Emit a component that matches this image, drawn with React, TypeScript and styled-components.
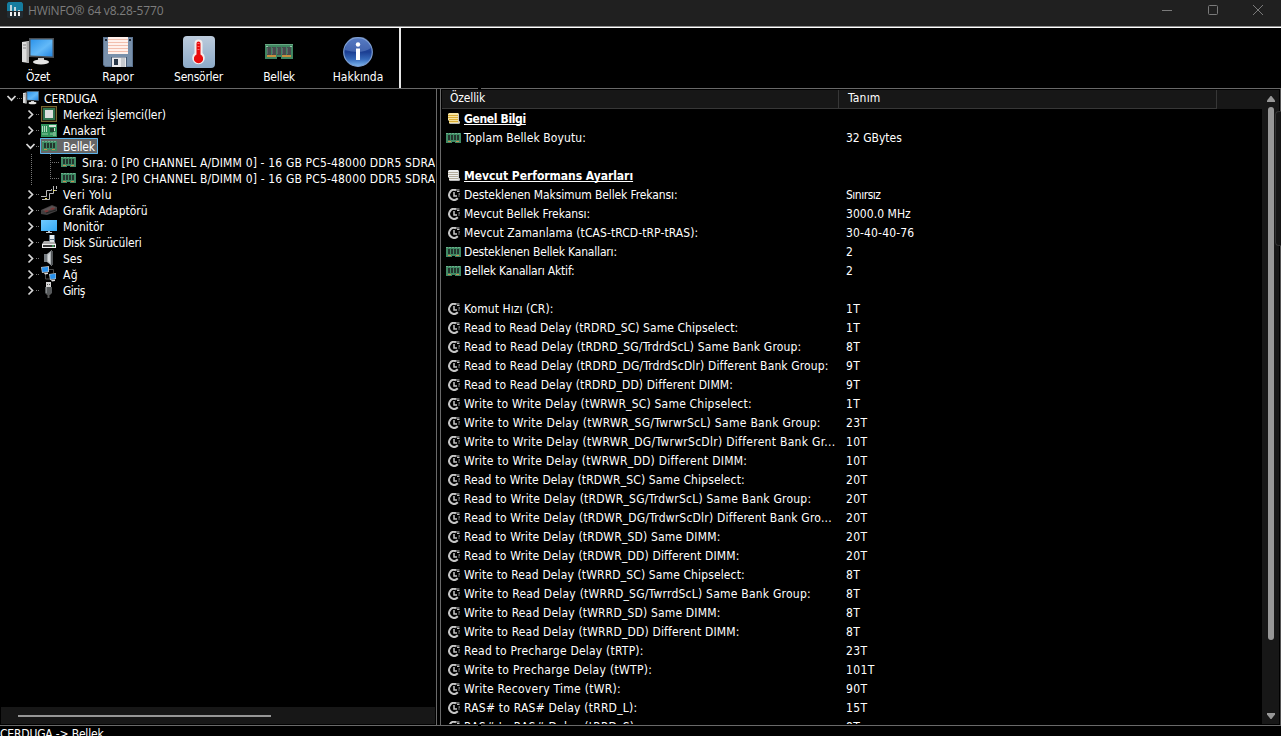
import React from 'react';
import styled, { createGlobalStyle, css } from 'styled-components';

const GlobalStyle = createGlobalStyle`
  * { box-sizing: border-box; }
  html, body { margin: 0; background: #000; overflow: hidden; }
  body { font: 12px/16px 'DejaVu Sans Condensed', 'DejaVu Sans', sans-serif; font-stretch: condensed; color: #fff; }
  svg { display: block; flex: none; }
`;

const Window = styled.div`
  position: relative;
  width: 1281px;
  height: 736px;
  overflow: hidden;
  display: flex;
  flex-direction: column;
  background: #000;
`;

const TitleBar = styled.header`
  height: 28px;
  flex: none;
  display: flex;
  align-items: flex-start;
  padding: 2px 18px 0 7px;
  background: #202020;
  border-bottom: 1px solid #fff;
  box-shadow: inset 0 -1px 0 #8c8c8c;
`;

const TitleText = styled.span`
  margin-left: 5px;
  flex: 1;
  font: 12px/17px 'Open Sans', 'Noto Sans', sans-serif;
  letter-spacing: -0.15px;
  color: #7d7d7d;
`;

const WindowButtons = styled.div`
  display: flex;
  gap: 35.5px;
  padding-top: 3px;
`;

const Toolbar = styled.nav`
  width: 401px;
  height: 60px;
  flex: none;
  display: flex;
  border-right: 2px solid #e6e6e6;
`;

const ToolButton = styled.div<{ $w?: number }>`
  width: ${p => p.$w ?? 80}px;
  flex: none;
  display: flex;
  flex-direction: column;
  align-items: center;
  padding-top: 7px;
`;

const ToolIcon = styled.div`
  height: 34px;
  display: flex;
  align-items: center;
`;

const ToolLabel = styled.span<{ $ls?: number }>`
  white-space: nowrap;
  line-height: 16px;
  letter-spacing: ${p => p.$ls ?? 0}px;
`;

const Rule = styled.div`
  height: 1px;
  flex: none;
  background: linear-gradient(90deg, #696969 478px, #000 478px, #000 481px, #696969 481px);
`;

const Panes = styled.main`
  height: 636px;
  flex: none;
  display: flex;
`;

const TreePane = styled.section`
  width: 437px;
  flex: none;
  display: flex;
  flex-direction: column;
  border-right: 1px solid #696969;
`;

const Tree = styled.div`
  flex: 1;
  width: 435px;
  padding-top: 1px;
  overflow: hidden;
`;

const TreeRow = styled.div<{ $depth: number }>`
  height: 16px;
  display: flex;
  align-items: center;
  white-space: nowrap;
  padding-left: ${p => [6, 25, 31][p.$depth]}px;
`;

const Toggle = styled.span`
  width: 11px;
  height: 16px;
  display: flex;
  align-items: center;
  justify-content: center;
`;

const Dots = styled.span<{ $w: number }>`
  width: ${p => p.$w}px;
  height: 1px;
  background: repeating-linear-gradient(90deg, #777 0 1px, transparent 1px 2px);
`;

const Branch = styled.span`
  width: 28px;
  height: 16px;
  display: flex;
  &::before {
    content: '';
    width: 1px;
    background: repeating-linear-gradient(180deg, #777 0 1px, transparent 1px 2px);
  }
`;

const BranchArm = styled.span<{ $last?: boolean }>`
  width: 10px;
  height: ${p => (p.$last ? 9 : 16)}px;
  margin-left: 18px;
  background:
    repeating-linear-gradient(180deg, #777 0 1px, transparent 1px 2px) 0 0 / 1px 100% no-repeat,
    repeating-linear-gradient(90deg, #777 0 1px, transparent 1px 2px) 0 8px / 100% 1px no-repeat;
`;

const Node = styled.span<{ $selected?: boolean; $root?: boolean }>`
  height: 16px;
  display: flex;
  align-items: center;
  padding: 0 3px 0 1px;
  gap: ${p => (p.$root ? 5 : 6)}px;
  ${p => p.$selected && css`
    background: #666;
    box-shadow: inset 0 0 0 1px #5fb4ea;
    border-radius: 1px;
  `}
`;

const Label = styled.span<{ $ls?: number }>`
  letter-spacing: ${p => p.$ls ?? 0}px;
  white-space: pre;
`;

const TreeLabel = styled(Label)`
  padding-top: 2px;
`;

const HScroll = styled.div`
  width: 434px;
  height: 17px;
  margin: 0 0 1px 1px;
  flex: none;
  display: flex;
  align-items: center;
  padding: 0 17px;
  background: #171717;
`;

const HThumb = styled.div`
  width: 253px;
  height: 2px;
  background: #979797;
`;

const ListPane = styled.section`
  flex: 1;
  display: flex;
  margin-left: 3px;
  border-left: 1px solid #696969;
  border-right: 1px solid #555;
  padding: 1px 1px 1px 1px;
`;

const ListArea = styled.div`
  flex: 1;
  display: flex;
  flex-direction: column;
  overflow: hidden;
`;

const HeaderRow = styled.div`
  height: 19px;
  flex: none;
  display: flex;
  background: #171717;
`;

const HeaderCell = styled.div<{ $w: number; $pad: number }>`
  width: ${p => p.$w}px;
  padding-left: ${p => p.$pad}px;
  line-height: 17px;
  border-right: 1px solid #373737;
  border-bottom: 1px solid #373737;
`;

const ListRow = styled.div`
  height: 19px;
  flex: none;
  display: flex;
  align-items: center;
`;

const PropertyCell = styled.div`
  width: 404px;
  height: 19px;
  display: flex;
  align-items: center;
  padding-left: 4px;
  gap: 2px;
`;

const IconBox = styled.span`
  width: 16px;
  display: flex;
  justify-content: center;
`;

const PropertyText = styled(Label)<{ $heading?: boolean }>`
  ${p => p.$heading && css`
    font-weight: bold;
    text-decoration: underline;
    text-underline-offset: 1px;
    text-decoration-skip-ink: none;
    text-decoration-thickness: 1px;
  `}
`;

const VScroll = styled.div`
  width: 17px;
  flex: none;
  display: flex;
  flex-direction: column;
  align-items: center;
  background: #171717;
  padding: 6px 0 5px;
`;

const VThumb = styled.div`
  width: 6px;
  height: 533px;
  margin-top: 5px;
  border-radius: 3px;
  background: #979797;
`;

const Spacer = styled.div`
  flex: 1;
`;

const StatusBar = styled.footer`
  height: 10px;
  overflow: hidden;
  flex: none;
  line-height: 16px;
  letter-spacing: -0.18px;
`;

const EdgeTab = styled.div`
  position: absolute;
  right: 0;
  top: 111px;
  width: 6px;
  height: 135px;
  border: 1px solid #333;
  border-right: 0;
  border-radius: 4px 0 0 4px;
  background: #151515;
`;

/* ---------- icons ---------- */

const AppLogo = () => (
  <svg width="16" height="16" viewBox="0 0 16 16">
    <rect width="16" height="16" rx="1.5" fill="#222b31" />
    <path d="M1.500 0h13L16 1.500V9H0V1.500z" fill="#157c9f" />
    <path d="M3 3h2v6H3zM7 5h2v4H7zM11 8h2v1h-2z" fill="#bfd3da" />
    <path d="M3 10h2v1H3zM7 10h2v1H7zM3 11h2v3H3zM7 11h2v3H7zM11 10h2v4h-2z" fill="#f0f0f0" />
  </svg>
);

const PcIcon = ({ w = 32, h = 28 }: { w?: number; h?: number }) => (
  <svg width={w} height={h} viewBox="0 0 32 28" preserveAspectRatio="none">
    <defs>
      <linearGradient id="scr" x1="0" y1="0" x2="1" y2="1">
        <stop offset="0" stopColor="#2c93ea" />
        <stop offset=".55" stopColor="#63b9f8" />
        <stop offset="1" stopColor="#2285e2" />
      </linearGradient>
    </defs>
    <path d="M0 4l7-1v22l-7-1z" fill="#dcdcdc" />
    <path d="M4.500 3.500H7V25l-2.500-.5z" fill="#a9a9a9" />
    <path d="M1 7h3M1 10h3" stroke="#888" />
    <path d="M7 0h25v20L7 19z" fill="#4b4f54" />
    <path d="M8.500 1.500h22v17l-22-1z" fill="url(#scr)" />
    <path d="M16 20h6v4h-6z" fill="#c9c9c9" />
    <ellipse cx="19" cy="24" rx="8" ry="2.600" fill="#e5e5e5" />
  </svg>
);

const FloppyIcon = () => (
  <svg width="30" height="30" viewBox="0 0 30 30">
    <path d="M0 0h30v30H2l-2-2z" fill="#5c7390" />
    <path d="M1 1h28v28H2.500L1 27.500z" fill="#7890ab" />
    <path d="M5 0h20v17H5z" fill="#fff1ec" />
    <path d="M5 2.500h20M5 5.500h20M5 8.500h20M5 11.500h20M5 14.500h20" stroke="#f2bfae" />
    <path d="M2 2h2v2H2zM26 2h2v2h-2z" fill="#1f2a38" />
    <path d="M8 20h16v10H8z" fill="#465a74" />
    <path d="M9 20.500h14V30H9z" fill="#e9e9ec" />
    <path d="M11 22h4v6h-4z" fill="#293747" />
    <path d="M18 21h4v9h-4z" fill="#c6c9ce" />
  </svg>
);

const ThermoIcon = () => (
  <svg width="32" height="32" viewBox="0 0 32 32">
    <defs>
      <linearGradient id="th" x1="0" y1="0" x2="0" y2="1">
        <stop offset="0" stopColor="#bccbdc" />
        <stop offset="1" stopColor="#8caac8" />
      </linearGradient>
    </defs>
    <rect width="32" height="32" rx="4" fill="url(#th)" />
    <path d="M11.500 7.500a4 4 0 0 1 8 0v9.500a6.300 6.300 0 1 1-8 0z" fill="#f3eded" />
    <path d="M13.500 7.500a2 2 0 0 1 4 0v11a4.600 4.600 0 1 1-4 0z" fill="#e90b0b" />
    <path d="M14.500 7.500h2M14.500 10.500h2M14.500 13.500h2" stroke="#ff6a6a" />
  </svg>
);

const BigRamIcon = () => (
  <svg width="28" height="16" viewBox="0 0 28 16">
    <path d="M0 0h28v15H16v-2h-4v2H0z" fill="#3f8560" />
    <path d="M0 .5h28" stroke="#68a883" />
    <path d="M1 2h2v1H1zM25 2h2v1h-2z" fill="#94c7a8" />
    <path d="M2 3h4v8H2zM7 3h4v8H7zM12 3h4v8h-4zM17 3h4v8h-4zM22 3h4v8h-4z" fill="#484b4e" />
    <path d="M2.500 4v6M7.500 4v6M12.500 4v6M17.500 4v6M22.500 4v6" stroke="#62666a" />
    <path d="M2 11h9v2H2zM17 11h9v2h-9z" fill="#c9903e" />
  </svg>
);

const InfoIcon = () => (
  <svg width="30" height="30" viewBox="0 0 30 30">
    <defs>
      <linearGradient id="inf" x1="0" y1="0" x2="0" y2="1">
        <stop offset="0" stopColor="#3c62b4" />
        <stop offset=".5" stopColor="#1b3e92" />
        <stop offset=".75" stopColor="#3568b8" />
        <stop offset="1" stopColor="#7db6ee" />
      </linearGradient>
    </defs>
    <circle cx="15" cy="15" r="14.300" fill="url(#inf)" stroke="#7d9ed2" strokeWidth="1.200" />
    <path d="M2 13A13 13 0 0 1 28 11Q18 18 2 13z" fill="#8aa8e0" opacity=".35" />
    <circle cx="15" cy="7.500" r="2.200" fill="#fff" />
    <path d="M13 11.500h4V23h-4z" fill="#fff" />
  </svg>
);

const RamIcon = ({ wide }: { wide?: boolean }) => (
  <svg width={wide ? 16 : 15} height="12" viewBox={wide ? '0 0 16 12' : '0 0 15 12'}>
    <path d="M0 1h15v10H9v-1H6v1H0z" fill="#3f8a64" />
    <path d="M0 1.500h15" stroke="#6bb08b" strokeDasharray="2 1" />
    <path d="M2 3h2v5H2zM5 3h2v5H5zM8 3h2v5H8zM11 3h2v5h-2z" fill="#24342d" />
    <path d="M2 9h3v1H2zM10 9h3v1h-3z" fill="#c98d50" />
  </svg>
);

const CpuIcon = () => (
  <svg width="16" height="16" viewBox="0 0 16 16">
    <rect width="16" height="16" fill="#262413" />
    <rect x=".5" y=".5" width="15" height="15" fill="none" stroke="#c9a94e" strokeDasharray="1 1" />
    <rect x="2" y="2" width="12" height="12" fill="#2f7350" />
    <rect x="4" y="4" width="8" height="8" fill="#dedede" />
  </svg>
);

const BoardIcon = () => (
  <svg width="16" height="13" viewBox="0 0 16 13">
    <path d="M0 0h16v13H0z" fill="#2f9159" />
    <path d="M1.500 2v6M3.500 2v6M5.500 2v6" stroke="#b9d9c4" />
    <path d="M8 1h7v2H8zM11 4h3v3h-3z" fill="#d7e5d9" />
    <path d="M9 4h4v4H9z" fill="#1f4430" />
    <path d="M1 10h6M9 10h5" stroke="#8fc9a4" />
    <path d="M12 8h3v4h-3z" fill="#74b58b" />
  </svg>
);

const BusIcon = () => (
  <svg width="16" height="16" viewBox="0 0 16 16" fill="none">
    <path d="M0 10.500h5.500v-6h5V3M1 13.500h7.500v-6h4V4.500H16M12.500 0v5M15.500 0v3" stroke="#b9b9b9" />
    <path d="M4 12.500h2M12 4.500h2" stroke="#e8dc62" />
  </svg>
);

const GpuIcon = () => (
  <svg width="16" height="12" viewBox="0 0 16 12">
    <path d="M0 6l11-5 5 2v4L6 11 0 10z" fill="#413f40" />
    <path d="M1 6l10-4 4 1.500-10 4z" fill="#5a5354" />
    <path d="M3 7l3-1 2 1-3 1.500zM9 5l3-1.500 2 1L11 6z" fill="#7f3434" />
    <path d="M5 9l10-3" stroke="#222" />
  </svg>
);

const MonitorIcon = () => (
  <svg width="16" height="13" viewBox="0 0 16 13">
    <defs>
      <linearGradient id="mon" x1="0" y1="0" x2="1" y2="1">
        <stop offset="0" stopColor="#71caff" />
        <stop offset="1" stopColor="#35a9f5" />
      </linearGradient>
    </defs>
    <path d="M0 0h16v11H0z" fill="url(#mon)" />
    <path d="M7 11h2v1H7zM5 12h6v1H5z" fill="#b9c5ce" />
  </svg>
);

const DiskIcon = () => (
  <svg width="16" height="14" viewBox="0 0 16 14">
    <path d="M8 0h6v8H8z" fill="#5c7286" />
    <path d="M9 0h4v4H9z" fill="#e7eef2" />
    <path d="M3 6h10l2 3H1z" fill="#aaa" />
    <path d="M9 5h4v2H9z" fill="#dfe3e6" />
    <path d="M1 9h14v4H1z" fill="#f0f0f0" />
    <path d="M2 10h12v2H2z" fill="#383838" />
    <path d="M11 10.500h2v1h-2z" fill="#3fe46e" />
  </svg>
);

const SpeakerIcon = () => (
  <svg width="16" height="16" viewBox="0 0 16 16">
    <path d="M3 4h3v8H3z" fill="#777d82" />
    <path d="M6 4l5-4v16l-5-4z" fill="#adb2b5" />
    <path d="M10 1h2v14h-2z" fill="#54585b" />
    <path d="M7 5l2-2v10l-2-2z" fill="#d6dadd" />
  </svg>
);

const NetworkIcon = () => (
  <svg width="16" height="16" viewBox="0 0 16 16">
    <path d="M8 3.500h4.500V7M4.500 8v5H9" fill="none" stroke="#4a4a4a" />
    <path d="M0 1l8-1v6l-7 1zM8 8l7-1v6l-6 1z" fill="#b9c2ca" />
    <path d="M1 1.500L7 1v4.500L1.500 6zM9 8.500l5.500-.7v4.700L9.500 13z" fill="#2691ef" />
    <path d="M3 7l4-.5v1.500l-3 .5zM10 14l4-.5v1.500l-3 .5z" fill="#dedede" />
  </svg>
);

const UsbIcon = () => (
  <svg width="16" height="16" viewBox="0 0 16 16">
    <path d="M5 0h5v5H5z" fill="#d6d6d6" />
    <path d="M6 2h1v1H6zM8 2h1v1H8z" fill="#555" />
    <path d="M4 5h7v6l-2 2H6l-2-2z" fill="#56595b" />
    <path d="M5 5h1v6H5z" fill="#85898b" />
    <path d="M6.500 12h2v4h-2z" fill="#555" />
  </svg>
);

const ScrollIcon = ({ color, shade }: { color: string; shade: string }) => (
  <svg width="12" height="11" viewBox="0 0 12 11">
    <path d="M1 0h9l1 1v7l1 1v1l-1 1H2l-1-1V8L0 7V1z" fill={color} />
    <path d="M10 1h1v7l1 1v1h-1l-1-1z" fill="#c9c9c9" />
    <path d="M0 2.500h10M0 4.500h10M1 6.500h9M1 8.500h9" stroke={shade} />
    <path d="M2 10.500h9" stroke="#b5b5b5" />
  </svg>
);

const ClockIcon = () => (
  <svg width="12" height="12" viewBox="0 0 12 12" fill="none" stroke="#c6c6c6">
    <path d="M8 1.200A5 5 0 1 0 9.800 9.300" strokeWidth="2" />
    <path d="M8 1h3.500M9 2.500h2.500M10.500 5h1.500M10.500 7h1" strokeWidth="1" />
    <path d="M6 3v4h3" strokeWidth="1.500" />
  </svg>
);

const Chevron = ({ open }: { open?: boolean }) => (
  <svg width="11" height="11" viewBox="0 0 11 11" fill="none" stroke="#d8d8d8" strokeWidth="1.700">
    <path d={open ? 'M1.500 3l4 4.200 4-4.200' : 'M3.500 1.500l4 4-4 4'} />
  </svg>
);

/* ---------- data ---------- */

const tools: { label: string; icon: React.ReactNode; w?: number; ls?: number }[] = [
  { label: 'Özet', icon: <PcIcon />, w: 76, ls: -0.2 },
  { label: 'Rapor', icon: <FloppyIcon />, w: 84 },
  { label: 'Sensörler', icon: <ThermoIcon />, w: 77, ls: -0.25 },
  { label: 'Bellek', icon: <BigRamIcon />, w: 84, ls: -0.2 },
  { label: 'Hakkında', icon: <InfoIcon />, w: 74 },
];

interface Item { label: string; icon: React.ReactNode; depth: number; open?: boolean; selected?: boolean; last?: boolean; ls?: number }

const tree: Item[] = [
  { label: 'CERDUGA', icon: <PcIcon w={16} h={14} />, depth: 0, open: true, ls: -0.1 },
  { label: 'Merkezi İşlemci(ler)', icon: <CpuIcon />, depth: 1, ls: -0.13 },
  { label: 'Anakart', icon: <BoardIcon />, depth: 1 },
  { label: 'Bellek', icon: <RamIcon />, depth: 1, open: true, selected: true, ls: -0.2 },
  { label: 'Sıra: 0 [P0 CHANNEL A/DIMM 0] - 16 GB PC5-48000 DDR5 SDRAM', icon: <RamIcon />, depth: 2, ls: 0.16 },
  { label: 'Sıra: 2 [P0 CHANNEL B/DIMM 0] - 16 GB PC5-48000 DDR5 SDRAM', icon: <RamIcon />, depth: 2, last: true, ls: 0.16 },
  { label: 'Veri Yolu', icon: <BusIcon />, depth: 1, ls: 0.4 },
  { label: 'Grafik Adaptörü', icon: <GpuIcon />, depth: 1, ls: -0.07 },
  { label: 'Monitör', icon: <MonitorIcon />, depth: 1 },
  { label: 'Disk Sürücüleri', icon: <DiskIcon />, depth: 1, ls: -0.2 },
  { label: 'Ses', icon: <SpeakerIcon />, depth: 1 },
  { label: 'Ağ', icon: <NetworkIcon />, depth: 1, ls: 0.3 },
  { label: 'Giriş', icon: <UsbIcon />, depth: 1, ls: -0.5 },
];

type Kind = 'gold' | 'silver' | 'ram' | 'clock' | 'none';
/* icon, property, value, tracking of the property, tracking of the value */
type Row = [Kind, string, string, number?, number?];

const rows: Row[] = [
  ['gold', 'Genel Bilgi', '', -0.35],
  ['ram', 'Toplam Bellek Boyutu:', '32 GBytes', 0.1],
  ['none', '', ''],
  ['silver', 'Mevcut Performans Ayarları', '', -0.04],
  ['clock', 'Desteklenen Maksimum Bellek Frekansı:', 'Sınırsız', -0.11, -0.5],
  ['clock', 'Mevcut Bellek Frekansı:', '3000.0 MHz', -0.04, 0.05],
  ['clock', 'Mevcut Zamanlama (tCAS-tRCD-tRP-tRAS):', '30-40-40-76', 0.08, 0.15],
  ['ram', 'Desteklenen Bellek Kanalları:', '2', -0.18],
  ['ram', 'Bellek Kanalları Aktif:', '2', -0.18],
  ['none', '', ''],
  ['clock', 'Komut Hızı (CR):', '1T', 0.06, 0.4],
  ['clock', 'Read to Read Delay (tRDRD_SC) Same Chipselect:', '1T', 0.065, 0.4],
  ['clock', 'Read to Read Delay (tRDRD_SG/TrdrdScL) Same Bank Group:', '8T', 0.16, 0.4],
  ['clock', 'Read to Read Delay (tRDRD_DG/TrdrdScDlr) Different Bank Group:', '9T', 0.13, 0.4],
  ['clock', 'Read to Read Delay (tRDRD_DD) Different DIMM:', '9T', 0.11, 0.4],
  ['clock', 'Write to Write Delay (tWRWR_SC) Same Chipselect:', '1T', 0.2, 0.4],
  ['clock', 'Write to Write Delay (tWRWR_SG/TwrwrScL) Same Bank Group:', '23T', 0.3, 0.4],
  ['clock', 'Write to Write Delay (tWRWR_DG/TwrwrScDlr) Different Bank Gr...', '10T', 0.29, 0.4],
  ['clock', 'Write to Write Delay (tWRWR_DD) Different DIMM:', '10T', 0.26, 0.4],
  ['clock', 'Read to Write Delay (tRDWR_SC) Same Chipselect:', '20T', 0.125, 0.4],
  ['clock', 'Read to Write Delay (tRDWR_SG/TrdwrScL) Same Bank Group:', '20T', 0.23, 0.4],
  ['clock', 'Read to Write Delay (tRDWR_DG/TrdwrScDlr) Different Bank Gro...', '20T', 0.2, 0.4],
  ['clock', 'Read to Write Delay (tRDWR_SD) Same DIMM:', '20T', 0.17, 0.4],
  ['clock', 'Read to Write Delay (tRDWR_DD) Different DIMM:', '20T', 0.17, 0.4],
  ['clock', 'Write to Read Delay (tWRRD_SC) Same Chipselect:', '8T', 0.125, 0.4],
  ['clock', 'Write to Read Delay (tWRRD_SG/TwrrdScL) Same Bank Group:', '8T', 0.23, 0.4],
  ['clock', 'Write to Read Delay (tWRRD_SD) Same DIMM:', '8T', 0.17, 0.4],
  ['clock', 'Write to Read Delay (tWRRD_DD) Different DIMM:', '8T', 0.17, 0.4],
  ['clock', 'Read to Precharge Delay (tRTP):', '23T', 0.22, 0.4],
  ['clock', 'Write to Precharge Delay (tWTP):', '101T', 0.31, 0.4],
  ['clock', 'Write Recovery Time (tWR):', '90T', 0.28, 0.4],
  ['clock', 'RAS# to RAS# Delay (tRRD_L):', '15T', 0.22, 0.4],
  ['clock', 'RAS# to RAS# Delay (tRRD_S):', '8T', 0.22, 0.4],
];

const rowIcons: Record<Kind, React.ReactNode> = {
  gold: <ScrollIcon color="#f6e3a0" shade="#d9ab35" />,
  silver: <ScrollIcon color="#ededed" shade="#b3ac9c" />,
  ram: <RamIcon wide />,
  clock: <ClockIcon />,
  none: null,
};

export default function App() {
  return (
    <>
      <GlobalStyle />
      <Window>
        <TitleBar>
          <AppLogo />
          <TitleText>HWiNFO® 64 v8.28-5770</TitleText>
          <WindowButtons>
            <svg width="10" height="10" stroke="#7a7a7a"><path d="M0 5.500h10" /></svg>
            <svg width="10" height="10" fill="none" stroke="#7a7a7a"><rect x=".5" y=".5" width="9" height="9" rx="1" /></svg>
            <svg width="10" height="10" stroke="#7a7a7a"><path d="M0 0l10 10M10 0L0 10" /></svg>
          </WindowButtons>
        </TitleBar>
        <Toolbar>
          {tools.map(t => (
            <ToolButton key={t.label} $w={t.w}>
              <ToolIcon>{t.icon}</ToolIcon>
              <ToolLabel $ls={t.ls}>{t.label}</ToolLabel>
            </ToolButton>
          ))}
        </Toolbar>
        <Rule />
        <Panes>
          <TreePane>
            <Tree>
              {tree.map(n => (
                <TreeRow key={n.label} $depth={n.depth}>
                  {n.depth === 2 ? (
                    <Branch>
                      <BranchArm $last={n.last} />
                    </Branch>
                  ) : (
                    <>
                      <Toggle><Chevron open={n.open} /></Toggle>
                      <Dots $w={n.depth ? 4 : 5} />
                    </>
                  )}
                  <Node $selected={n.selected} $root={n.depth === 0}>
                    <IconBox>{n.icon}</IconBox>
                    <TreeLabel $ls={n.ls}>{n.label}</TreeLabel>
                  </Node>
                </TreeRow>
              ))}
            </Tree>
            <HScroll><HThumb /></HScroll>
          </TreePane>
          <ListPane>
            <ListArea>
              <HeaderRow>
                <HeaderCell $w={397} $pad={8}><Label $ls={-0.15}>Özellik</Label></HeaderCell>
                <HeaderCell $w={378} $pad={9}><Label $ls={0.2}>Tanım</Label></HeaderCell>
              </HeaderRow>
              {rows.map(([kind, name, value, nameLs, valueLs], i) => (
                <ListRow key={i}>
                  <PropertyCell>
                    <IconBox>{rowIcons[kind]}</IconBox>
                    <PropertyText $heading={kind === 'gold' || kind === 'silver'} $ls={nameLs}>{name}</PropertyText>
                  </PropertyCell>
                  <Label $ls={valueLs}>{value}</Label>
                </ListRow>
              ))}
            </ListArea>
            <VScroll>
              <svg width="8" height="6" fill="#979797"><path d="M3.500 0h1L8 4.500V6H0V4.500z" /></svg>
              <VThumb />
              <Spacer />
              <svg width="8" height="6" fill="#979797"><path d="M3.500 6h1L8 1.500V0H0v1.500z" /></svg>
            </VScroll>
          </ListPane>
        </Panes>
        <Rule />
        <StatusBar>CERDUGA -&gt; Bellek</StatusBar>
        <EdgeTab />
      </Window>
    </>
  );
}
